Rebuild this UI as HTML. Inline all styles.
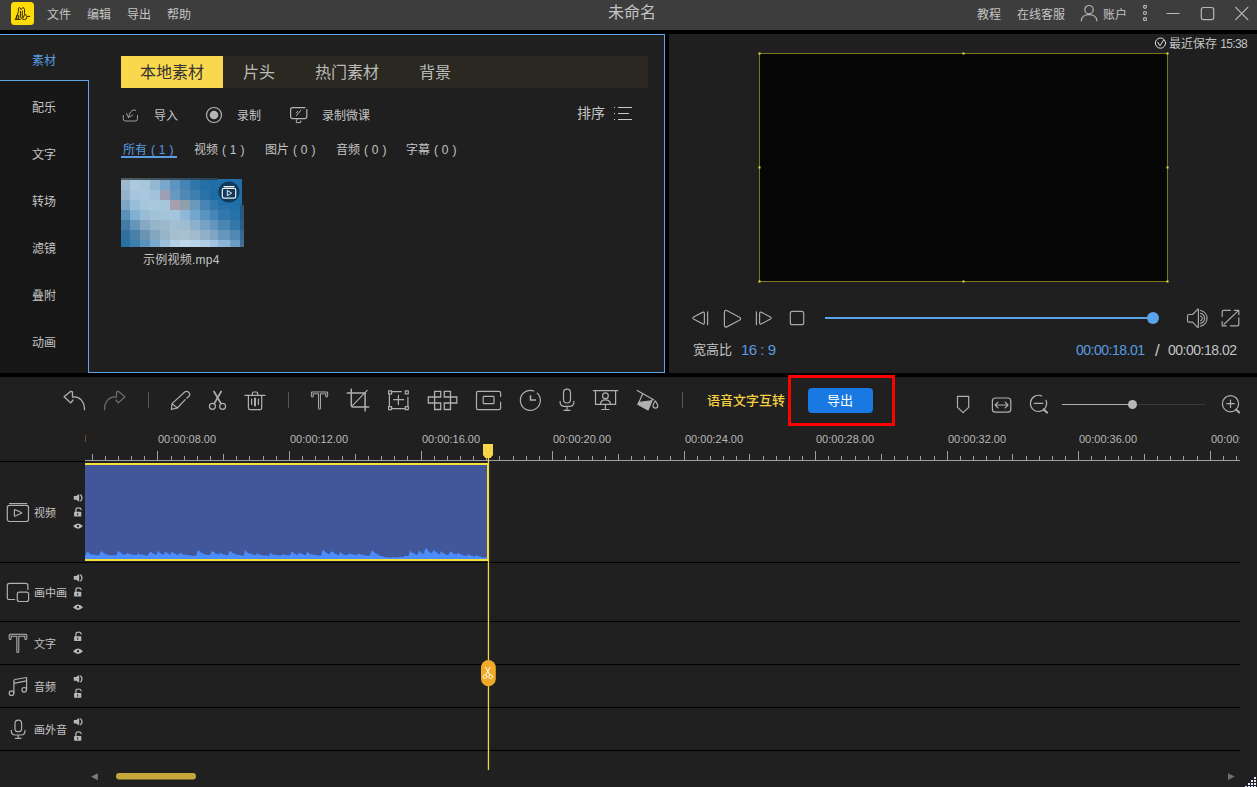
<!DOCTYPE html>
<html lang="zh-CN">
<head>
<meta charset="utf-8">
<title>未命名</title>
<style>
html,body{margin:0;padding:0}
body{width:1257px;height:787px;overflow:hidden;background:#000;position:relative;
 font-family:"Liberation Sans","Noto Sans CJK SC",sans-serif;font-size:12px;color:#c4c4c4}
.a{position:absolute}
.t{position:absolute;white-space:nowrap;height:20px;line-height:20px}
svg{position:absolute;overflow:visible}
.ic{fill:none;stroke-linecap:round;stroke-linejoin:round}
#titlebar{left:0;top:0;width:1257px;height:30px;background:#3d3d3d}
#left{left:0;top:34px;width:665px;height:339px;background:#1f1f1f}
#side{left:0;top:81px;width:88px;height:292px;background:#171717}
#right{left:669px;top:34px;width:588px;height:339px;background:#1f1f1f}
#tl{left:0;top:377px;width:1257px;height:410px;background:#202020}
.bl{position:absolute;background:#60a4e8}
.sep{position:absolute;background:#000;height:1px;left:0;width:1240px}
.rl{top:429px;font-size:11px;color:#b8b8b8}
.vs{position:absolute;width:1px;height:16px;background:#555;top:392px}
</style>
</head>
<body>
<!-- TITLE BAR -->
<div class="a" id="titlebar"></div>
<div class="a" style="left:11px;top:2px;width:23px;height:23px;border-radius:3.5px;background:#ffdc08"></div>
<div class="t" style="left:47px;top:5px">文件</div>
<div class="t" style="left:87px;top:5px">编辑</div>
<div class="t" style="left:127px;top:5px">导出</div>
<div class="t" style="left:167px;top:5px">帮助</div>
<div class="t" style="left:608px;top:3px;font-size:16px">未命名</div>
<div class="t" style="left:977px;top:5px">教程</div>
<div class="t" style="left:1017px;top:5px">在线客服</div>
<div class="t" style="left:1103px;top:5px">账户</div>

<!-- LEFT PANEL -->
<div class="a" id="left"></div>
<div class="a" id="side"></div>
<div class="bl" style="left:0;top:34px;width:665px;height:1px"></div>
<div class="bl" style="left:664px;top:34px;width:1px;height:339px"></div>
<div class="bl" style="left:88px;top:372px;width:577px;height:1px"></div>
<div class="bl" style="left:0;top:80px;width:89px;height:1px"></div>
<div class="bl" style="left:88px;top:80px;width:1px;height:293px"></div>

<div class="t" style="left:32px;top:51px;color:#5b9be0">素材</div>
<div class="t" style="left:32px;top:98px">配乐</div>
<div class="t" style="left:32px;top:145px">文字</div>
<div class="t" style="left:32px;top:192px">转场</div>
<div class="t" style="left:32px;top:239px">滤镜</div>
<div class="t" style="left:32px;top:286px">叠附</div>
<div class="t" style="left:32px;top:333px">动画</div>

<div class="a" style="left:121px;top:56px;width:527px;height:32px;background:#2a2820"></div>
<div class="a" style="left:121px;top:56px;width:102px;height:32px;background:#fad84e"></div>
<div class="t" style="left:140px;top:63px;font-size:16px;color:#333">本地素材</div>
<div class="t" style="left:243px;top:63px;font-size:16px;color:#bcbcbc">片头</div>
<div class="t" style="left:315px;top:63px;font-size:16px;color:#bcbcbc">热门素材</div>
<div class="t" style="left:419px;top:63px;font-size:16px;color:#bcbcbc">背景</div>

<div class="t" style="left:154px;top:106px">导入</div>
<div class="t" style="left:237px;top:106px">录制</div>
<div class="t" style="left:322px;top:106px">录制微课</div>
<div class="t" style="left:577px;top:103px;font-size:14px">排序</div>

<div class="t" style="left:123px;top:140px;word-spacing:0.6px;color:#5b9be0">所有 ( 1 )</div>
<div class="a" style="left:121px;top:156px;width:56px;height:2px;background:#5b9be0"></div>
<div class="t" style="left:194px;top:140px;word-spacing:0.6px">视频 ( 1 )</div>
<div class="t" style="left:265px;top:140px;word-spacing:0.6px">图片 ( 0 )</div>
<div class="t" style="left:336px;top:140px;word-spacing:0.6px">音频 ( 0 )</div>
<div class="t" style="left:406px;top:140px;word-spacing:0.6px">字幕 ( 0 )</div>

<!--THUMB-->
<svg id="thumb" style="left:0;top:0" width="260" height="260" shape-rendering="crispEdges">
<defs><linearGradient id="tg" x1="0" x2="1"><stop offset="0" stop-color="#555d63"/><stop offset="0.45" stop-color="#3d4f5c"/><stop offset="1" stop-color="#23425a"/></linearGradient></defs>
<rect x="121" y="178" width="97" height="2" fill="url(#tg)"/>
<rect x="121" y="180" width="9" height="10" fill="#a0b8cc"/>
<rect x="130" y="180" width="10" height="10" fill="#adc9e0"/>
<rect x="140" y="180" width="10" height="10" fill="#a8c6dc"/>
<rect x="150" y="180" width="10" height="10" fill="#94b8d3"/>
<rect x="160" y="180" width="10" height="10" fill="#7aa8cc"/>
<rect x="170" y="180" width="10" height="10" fill="#5c93bf"/>
<rect x="180" y="180" width="10" height="10" fill="#4584b4"/>
<rect x="190" y="180" width="10" height="10" fill="#2f76aa"/>
<rect x="200" y="180" width="10" height="10" fill="#2470a6"/>
<rect x="210" y="180" width="8" height="10" fill="#1f6ea6"/>
<rect x="218" y="180" width="12" height="10" fill="#1f72ac"/>
<rect x="230" y="180" width="10" height="10" fill="#1f72ac"/>
<rect x="240" y="180" width="4" height="10" fill="#1f72ac"/>
<rect x="121" y="190" width="9" height="10" fill="#94b2ca"/>
<rect x="130" y="190" width="10" height="10" fill="#a6c6de"/>
<rect x="140" y="190" width="10" height="10" fill="#a8c8de"/>
<rect x="150" y="190" width="10" height="10" fill="#a2c2da"/>
<rect x="160" y="190" width="10" height="10" fill="#9ca0b6"/>
<rect x="170" y="190" width="10" height="10" fill="#6698c0"/>
<rect x="180" y="190" width="10" height="10" fill="#5089b5"/>
<rect x="190" y="190" width="10" height="10" fill="#3e80b0"/>
<rect x="200" y="190" width="10" height="10" fill="#2a72a6"/>
<rect x="210" y="190" width="8" height="10" fill="#1f6ca4"/>
<rect x="218" y="190" width="12" height="10" fill="#1f72ac"/>
<rect x="230" y="190" width="10" height="10" fill="#1f72ac"/>
<rect x="240" y="190" width="4" height="10" fill="#1f72ac"/>
<rect x="121" y="200" width="9" height="10" fill="#7ea6c4"/>
<rect x="130" y="200" width="10" height="10" fill="#98bed8"/>
<rect x="140" y="200" width="10" height="10" fill="#a6c6dc"/>
<rect x="150" y="200" width="10" height="10" fill="#aac8dc"/>
<rect x="160" y="200" width="10" height="10" fill="#a6c6dc"/>
<rect x="170" y="200" width="10" height="10" fill="#a6a0ae"/>
<rect x="180" y="200" width="10" height="10" fill="#8f9fae"/>
<rect x="190" y="200" width="10" height="10" fill="#6a98b8"/>
<rect x="200" y="200" width="10" height="10" fill="#4685b4"/>
<rect x="210" y="200" width="8" height="10" fill="#3278aa"/>
<rect x="218" y="200" width="12" height="10" fill="#2872a8"/>
<rect x="230" y="200" width="10" height="10" fill="#2270a8"/>
<rect x="240" y="200" width="4" height="10" fill="#2a5678"/>
<rect x="121" y="210" width="9" height="10" fill="#5c90b8"/>
<rect x="130" y="210" width="10" height="10" fill="#82b0d0"/>
<rect x="140" y="210" width="10" height="10" fill="#98bcd4"/>
<rect x="150" y="210" width="10" height="10" fill="#a2c2d8"/>
<rect x="160" y="210" width="10" height="10" fill="#a4c4da"/>
<rect x="170" y="210" width="10" height="10" fill="#a2c4dc"/>
<rect x="180" y="210" width="10" height="10" fill="#90b8d6"/>
<rect x="190" y="210" width="10" height="10" fill="#72a6cc"/>
<rect x="200" y="210" width="10" height="10" fill="#5a94c0"/>
<rect x="210" y="210" width="8" height="10" fill="#4686b6"/>
<rect x="218" y="210" width="12" height="10" fill="#3278ac"/>
<rect x="230" y="210" width="10" height="10" fill="#2672a8"/>
<rect x="240" y="210" width="4" height="10" fill="#285a80"/>
<rect x="121" y="220" width="9" height="10" fill="#427ba6"/>
<rect x="130" y="220" width="10" height="10" fill="#6496ba"/>
<rect x="140" y="220" width="10" height="10" fill="#86a8c2"/>
<rect x="150" y="220" width="10" height="10" fill="#96b4ca"/>
<rect x="160" y="220" width="10" height="10" fill="#9cb8cc"/>
<rect x="170" y="220" width="10" height="10" fill="#a2bed2"/>
<rect x="180" y="220" width="10" height="10" fill="#a0bcd0"/>
<rect x="190" y="220" width="10" height="10" fill="#8cb0cc"/>
<rect x="200" y="220" width="10" height="10" fill="#76a2c4"/>
<rect x="210" y="220" width="8" height="10" fill="#6296bc"/>
<rect x="218" y="220" width="12" height="10" fill="#4a86b2"/>
<rect x="230" y="220" width="10" height="10" fill="#3278a8"/>
<rect x="240" y="220" width="4" height="10" fill="#2c5e84"/>
<rect x="121" y="230" width="9" height="10" fill="#30709e"/>
<rect x="130" y="230" width="10" height="10" fill="#4a80a8"/>
<rect x="140" y="230" width="10" height="10" fill="#6a94b4"/>
<rect x="150" y="230" width="10" height="10" fill="#86a6c0"/>
<rect x="160" y="230" width="10" height="10" fill="#98b4c8"/>
<rect x="170" y="230" width="10" height="10" fill="#a6bece"/>
<rect x="180" y="230" width="10" height="10" fill="#a8c0d0"/>
<rect x="190" y="230" width="10" height="10" fill="#a0bace"/>
<rect x="200" y="230" width="10" height="10" fill="#90b0ca"/>
<rect x="210" y="230" width="8" height="10" fill="#80a6c4"/>
<rect x="218" y="230" width="12" height="10" fill="#6696bc"/>
<rect x="230" y="230" width="10" height="10" fill="#5088b2"/>
<rect x="240" y="230" width="4" height="10" fill="#386a90"/>
<rect x="121" y="240" width="9" height="7" fill="#2a70a2"/>
<rect x="130" y="240" width="10" height="7" fill="#3c80b0"/>
<rect x="140" y="240" width="10" height="7" fill="#5a94be"/>
<rect x="150" y="240" width="10" height="7" fill="#7aa8cc"/>
<rect x="160" y="240" width="10" height="7" fill="#9cc0dc"/>
<rect x="170" y="240" width="10" height="7" fill="#b4d0e6"/>
<rect x="180" y="240" width="10" height="7" fill="#c0d8ec"/>
<rect x="190" y="240" width="10" height="7" fill="#b8d4ea"/>
<rect x="200" y="240" width="10" height="7" fill="#b0cee6"/>
<rect x="210" y="240" width="8" height="7" fill="#a2c4e0"/>
<rect x="218" y="240" width="12" height="7" fill="#8cb4d6"/>
<rect x="230" y="240" width="10" height="7" fill="#6c9cc4"/>
<rect x="240" y="240" width="4" height="7" fill="#446f92"/>
<rect x="218" y="179" width="24" height="26" fill="#1f70aa"/>
<rect x="242" y="177" width="3" height="28" fill="#1f1f1f"/>
</svg>
<!--/THUMB-->
<div class="t" style="left:143px;top:250px;letter-spacing:0.25px">示例视频.mp4</div>

<!-- RIGHT PANEL -->
<div class="a" id="right"></div>
<div class="t" style="left:1169px;top:34px">最近保存 <span style="letter-spacing:-0.7px">15:38</span></div>
<div class="a" style="left:825px;top:317px;width:328px;height:2px;background:#5ba4ea"></div>
<div class="a" style="left:1147px;top:312px;width:12px;height:12px;border-radius:6px;background:#5ba4ea"></div>
<div class="t" style="left:693px;top:340px;font-size:13px">宽高比</div>
<div class="t" style="left:741px;top:340px;font-size:15px;letter-spacing:-0.5px;color:#5b9be0">16 : 9</div>
<div class="t" style="left:1076px;top:340px;font-size:14px;letter-spacing:-0.5px;color:#5b9be0">00:00:18.01</div>
<div class="t" style="left:1155px;top:341px;font-size:17px">/</div>
<div class="t" style="left:1168px;top:340px;font-size:14px;letter-spacing:-0.5px">00:00:18.02</div>

<!-- TIMELINE -->
<div class="a" id="tl"></div>
<div class="vs" style="left:148px"></div>
<div class="vs" style="left:288px"></div>
<div class="vs" style="left:682px"></div>
<div class="t" style="left:707px;top:391px;font-size:13px;font-weight:500;color:#f5d040">语音文字互转</div>
<div class="a" style="left:808px;top:388px;width:65px;height:25px;border-radius:4px;background:#1a78e2"></div>
<div class="t" style="left:827px;top:391px;font-size:13px;color:#fff">导出</div>
<div class="a" style="left:788px;top:375px;width:101px;height:45px;border:3px solid #ff0000"></div>

<div class="a" style="left:1062px;top:404px;width:70px;height:1px;background:#b0b0b0"></div>
<div class="a" style="left:1132px;top:404px;width:73px;height:1px;background:#3a3a3a"></div>
<div class="a" style="left:1128px;top:400px;width:9px;height:9px;border-radius:5px;background:#b8b8b8"></div>

<!--RULER-->
<svg id="ruler" style="left:0;top:0" width="1257" height="470" shape-rendering="crispEdges">
<rect x="85" y="460" width="1155" height="1" fill="#a0a0a0"/>
<path d="M92.5 454V460M105.5 456V460M118.5 456V460M131.5 456V460M144.5 456V460M157.5 451V460M171.5 456V460M184.5 456V460M197.5 456V460M210.5 456V460M223.5 454V460M236.5 456V460M249.5 456V460M263.5 456V460M276.5 456V460M289.5 451V460M302.5 456V460M315.5 456V460M328.5 456V460M342.5 456V460M355.5 454V460M368.5 456V460M381.5 456V460M394.5 456V460M407.5 456V460M421.5 451V460M434.5 456V460M447.5 456V460M460.5 456V460M473.5 456V460M486.5 454V460M499.5 456V460M513.5 456V460M526.5 456V460M539.5 456V460M552.5 451V460M565.5 456V460M578.5 456V460M592.5 456V460M605.5 456V460M618.5 454V460M631.5 456V460M644.5 456V460M657.5 456V460M670.5 456V460M684.5 451V460M697.5 456V460M710.5 456V460M723.5 456V460M736.5 456V460M749.5 454V460M763.5 456V460M776.5 456V460M789.5 456V460M802.5 456V460M815.5 451V460M828.5 456V460M841.5 456V460M855.5 456V460M868.5 456V460M881.5 454V460M894.5 456V460M907.5 456V460M920.5 456V460M934.5 456V460M947.5 451V460M960.5 456V460M973.5 456V460M986.5 456V460M999.5 456V460M1012.5 454V460M1026.5 456V460M1039.5 456V460M1052.5 456V460M1065.5 456V460M1078.5 451V460M1091.5 456V460M1105.5 456V460M1118.5 456V460M1131.5 456V460M1144.5 454V460M1157.5 456V460M1170.5 456V460M1183.5 456V460M1197.5 456V460M1210.5 451V460M1223.5 456V460M1236.5 456V460" stroke="#a0a0a0" stroke-width="1" fill="none"/>
</svg>
<div class="t rl" style="left:158px">00:00:08.00</div>
<div class="t rl" style="left:290px">00:00:12.00</div>
<div class="t rl" style="left:422px">00:00:16.00</div>
<div class="t rl" style="left:553px">00:00:20.00</div>
<div class="t rl" style="left:685px">00:00:24.00</div>
<div class="t rl" style="left:816px">00:00:28.00</div>
<div class="t rl" style="left:948px">00:00:32.00</div>
<div class="t rl" style="left:1079px">00:00:36.00</div>
<div class="t rl" style="left:1211px;width:29px;overflow:hidden">00:00:40.00</div>
<div class="a" style="left:85px;top:435px;width:1px;height:7px;background:#7a4e26;border-radius:1px"></div>
<!--/RULER-->

<div class="sep" style="top:461px;width:85px"></div>
<div class="sep" style="top:562px"></div>
<div class="sep" style="top:621px"></div>
<div class="sep" style="top:664px"></div>
<div class="sep" style="top:707px"></div>
<div class="sep" style="top:750px"></div>

<div class="a" style="left:85px;top:463px;width:403px;height:98px;background:#41579a;border-top:2px solid #f3e23a;border-bottom:2px solid #f3e23a;border-right:1px solid #f3e23a;box-sizing:border-box"></div>

<!--WAVE-->
<svg id="wave" style="left:0;top:0" width="500" height="570"><polygon fill="#4b8dff" points="85,559.0 85,556.2 86,553.9 87,551.5 88,552.1 89,552.7 90,553.9 91,554.4 92,553.9 93,554.8 94,555.1 95,554.5 96,555.2 97,555.0 98,555.5 99,555.4 100,553.5 101,551.0 102,551.6 103,552.7 104,553.0 105,553.6 106,554.7 107,554.2 108,554.7 109,555.2 110,555.7 111,554.9 112,555.4 113,555.3 114,555.2 115,555.4 116,555.2 117,553.7 118,550.4 119,551.7 120,552.0 121,552.7 122,554.0 123,554.4 124,554.7 125,554.1 126,555.0 127,552.4 128,553.4 129,553.7 130,554.2 131,554.6 132,554.6 133,554.8 134,554.7 135,555.1 136,554.9 137,555.1 138,553.0 139,553.8 140,554.7 141,554.3 142,554.4 143,554.6 144,555.2 145,555.1 146,555.8 147,555.2 148,555.5 149,553.2 150,552.2 151,552.1 152,552.6 153,554.1 154,553.7 155,554.5 156,555.1 157,553.5 158,551.1 159,551.8 160,553.4 161,553.3 162,554.4 163,554.0 164,554.8 165,551.4 166,552.0 167,553.2 168,553.1 169,554.3 170,554.9 171,552.7 172,552.0 173,552.6 174,553.1 175,553.4 176,554.3 177,554.8 178,554.2 179,555.1 180,552.5 181,553.1 182,554.1 183,554.4 184,554.6 185,554.7 186,555.0 187,555.2 188,555.2 189,555.0 190,555.5 191,555.7 192,555.4 193,556.0 194,556.0 195,555.3 196,555.8 197,553.0 198,549.9 199,550.7 200,551.5 201,552.9 202,552.9 203,553.4 204,554.5 205,554.2 206,554.7 207,554.7 208,555.2 209,555.0 210,555.1 211,552.7 212,551.2 213,551.4 214,551.9 215,553.3 216,553.6 217,553.9 218,554.6 219,554.8 220,552.6 221,553.2 222,553.5 223,554.2 224,554.5 225,554.3 226,555.4 227,555.0 228,555.0 229,552.3 230,550.9 231,551.2 232,552.6 233,553.4 234,553.6 235,553.8 236,554.8 237,554.8 238,555.1 239,554.7 240,555.3 241,555.0 242,555.8 243,555.7 244,554.9 245,549.6 246,551.1 247,552.3 248,553.1 249,553.2 250,554.1 251,553.8 252,554.1 253,555.1 254,555.2 255,554.8 256,555.1 257,553.1 258,554.0 259,554.7 260,554.8 261,554.5 262,555.3 263,555.4 264,555.4 265,555.5 266,555.6 267,555.1 268,556.0 269,556.3 270,553.1 271,553.6 272,553.8 273,554.7 274,554.4 275,554.6 276,555.5 277,555.1 278,555.1 279,555.4 280,555.6 281,555.9 282,553.9 283,554.4 284,554.9 285,554.6 286,555.2 287,554.8 288,555.8 289,555.0 290,555.3 291,553.1 292,551.6 293,552.3 294,553.2 295,554.3 296,553.9 297,554.9 298,555.0 299,552.3 300,553.1 301,553.7 302,553.6 303,554.3 304,554.8 305,555.2 306,554.7 307,552.1 308,552.4 309,553.5 310,554.1 311,554.2 312,554.2 313,555.1 314,554.7 315,554.7 316,555.0 317,555.1 318,556.1 319,555.5 320,555.3 321,556.2 322,552.5 323,549.7 324,550.6 325,551.7 326,552.4 327,552.7 328,554.1 329,554.5 330,553.5 331,551.1 332,552.1 333,551.9 334,552.7 335,554.0 336,554.0 337,554.6 338,554.9 339,555.1 340,551.9 341,552.7 342,553.5 343,554.2 344,554.4 345,554.9 346,554.7 347,554.8 348,555.3 349,553.3 350,553.7 351,554.0 352,554.1 353,554.2 354,554.9 355,554.7 356,555.0 357,555.4 358,553.6 359,553.9 360,554.0 361,554.7 362,554.6 363,555.1 364,555.5 365,555.3 366,555.2 367,556.0 368,555.7 369,555.8 370,555.3 371,552.3 372,550.5 373,550.9 374,551.9 375,553.1 376,553.5 377,554.3 378,553.9 379,555.8 380,555.8 381,556.1 382,556.4 383,556.5 384,556.8 385,557.4 386,556.9 387,557.6 388,557.5 389,556.9 390,557.7 391,557.7 392,557.7 393,556.8 394,557.6 395,557.8 396,556.9 397,557.7 398,556.9 399,557.1 400,557.0 401,556.8 402,557.2 403,557.0 404,556.5 405,555.6 406,555.9 407,555.7 408,556.4 409,554.6 410,550.2 411,552.1 412,552.6 413,553.0 414,553.2 415,554.3 416,554.7 417,554.9 418,553.8 419,550.2 420,551.6 421,552.4 422,553.1 423,553.6 424,554.0 425,549.5 426,548.1 427,549.0 428,550.8 429,551.4 430,552.8 431,552.8 432,553.3 433,550.9 434,550.1 435,551.2 436,551.9 437,552.3 438,553.7 439,554.2 440,553.9 441,551.0 442,552.3 443,553.0 444,553.3 445,554.3 446,554.6 447,554.9 448,554.8 449,554.4 450,551.5 451,551.8 452,552.3 453,553.6 454,553.6 455,554.3 456,554.2 457,554.8 458,552.4 459,553.3 460,554.2 461,554.2 462,554.8 463,555.4 464,555.5 465,555.9 466,555.6 467,556.5 468,553.8 469,554.9 470,555.2 471,555.7 472,555.6 473,555.9 474,556.4 475,556.7 476,555.1 477,555.4 478,556.3 479,556.2 480,556.3 481,557.0 482,557.5 483,557.7 484,557.3 485,557.5 486,557.3 487,557.5 487,559.0"/></svg>
<!--/WAVE-->
<div class="t" style="left:34px;top:503px;font-size:11px">视频</div>
<div class="t" style="left:34px;top:583px;font-size:11px">画中画</div>
<div class="t" style="left:34px;top:634px;font-size:11px">文字</div>
<div class="t" style="left:34px;top:677px;font-size:11px">音频</div>
<div class="t" style="left:34px;top:720px;font-size:11px">画外音</div>


<!--ICONS-->
<svg id="icons" style="left:0;top:0" width="1257" height="787" viewBox="0 0 1257 787">
<!-- logo glyph -->
<g fill="none" stroke="#1a1400" stroke-width="0.9" stroke-linejoin="round" stroke-linecap="round">
<path d="M15.2 19.4H20.4M15.6 19.2L18.4 11.7L18.3 8.9L19.5 7.3L21 9.6L23.1 7.3L24.5 9.3V13.5L25.9 15L26.8 16.4L26.3 18.9L24.5 19.6L22.4 19.2L21.3 17.8M27.4 16.4H29.7M20.4 11.4V17.2M17 15.5L16.8 19M18.6 15.5L18.8 19M22.3 11V17.5M24.6 14.5L23.2 17.8"/>
</g>
<!-- title bar right -->
<g class="ic" stroke="#b8b8b8" stroke-width="1.2">
<circle cx="1089" cy="9.7" r="4.2"/>
<path d="M1081.3 20.8C1081.3 16.6 1084.8 14.6 1089 14.6S1096.9 16.6 1096.9 20.8"/>
<circle cx="1145" cy="6.8" r="1.5"/><circle cx="1145" cy="13" r="1.5"/><circle cx="1145" cy="19.2" r="1.5"/>
<path d="M1167 13.5H1179"/>
<rect x="1201.3" y="7.5" width="12.4" height="12.2" rx="2.2"/>
<path d="M1235.7 7.3L1247.8 19.6M1247.8 7.3L1235.7 19.6"/>
</g>
<!-- left panel row icons -->
<g class="ic" stroke="#a4a4a4" stroke-width="0.95">
<path d="M123.3 115.4V118.8Q123.3 121 125.5 121H135.3Q137.5 121 137.5 118.8V115.4"/>
<path d="M135.8 110.2Q133 108.6 130.6 112Q129 114.6 128.5 117.5M126.5 113.4L128.5 117.6L132.6 115.1"/>
</g>
<g class="ic" stroke="#b4b4b4" stroke-width="1.2">
<circle cx="214" cy="115" r="7.5"/>
<circle cx="214" cy="115" r="4.3" fill="#b4b4b4" stroke="none"/>
<path d="M305 107.6H292.8Q290.6 107.6 290.6 109.8V116.6Q290.6 118.7 292.8 118.7H304.6Q306.8 118.7 306.8 116.6V109.6"/>
<path d="M297.5 118.8L296.3 120.8V122.6H300.8V120.8M296.5 115.5L300.7 110.4M296.3 113L297.6 111.4" stroke-width="1"/>
</g>
<g stroke="#c8c8c8" stroke-width="1" fill="none" shape-rendering="crispEdges">
<path d="M614 107.5H615M614 113.5H615M614 119.5H615M618 107.5H632M618 113.5H629M618 119.5H632"/>
</g>
<!-- thumb badge -->
<circle cx="229" cy="192" r="10.6" fill="#0f3a5c"/>
<g class="ic" stroke="#f0f0f0" stroke-width="1.2">
<path d="M224 186.6H234"/>
<rect x="222.3" y="188.3" width="13.4" height="9.8" rx="1.6"/>
<path d="M227.3 190.8V195.8L231.3 193.3Z" stroke-width="1"/>
</g>
<!-- saved check -->
<g class="ic" stroke="#e0e0e0" stroke-width="1">
<circle cx="1160.5" cy="43.1" r="5.1"/>
<path d="M1157.8 42.3L1160 45.8L1163.5 40.2"/>
</g>
<!-- preview frame -->
<rect x="759.5" y="53.5" width="408" height="228" fill="#060606" stroke="#78781e" stroke-width="1"/>
<g fill="#e6e62e">
<rect x="758.5" y="52.5" width="2" height="2"/><rect x="962.5" y="52.5" width="2" height="2"/><rect x="1166.5" y="52.5" width="2" height="2"/>
<rect x="758.5" y="166.5" width="2" height="2"/><rect x="1166.5" y="166.5" width="2" height="2"/>
<rect x="758.5" y="280.5" width="2" height="2"/><rect x="962.5" y="280.5" width="2" height="2"/><rect x="1166.5" y="280.5" width="2" height="2"/>
</g>
<!-- player controls -->
<g class="ic" stroke="#a8a8a8" stroke-width="1.2">
<path d="M704.4 313.6Q704.4 311.4 702.4 312.4L693.6 317Q692 318 693.6 319L702.4 323.8Q704.4 324.8 704.4 322.6ZM707.6 311.8V324.7"/>
<path d="M724.4 312.6Q724.4 309.2 727.3 310.8L739.4 317.2Q741.8 318.7 739.4 320.2L727.3 326.6Q724.4 328.2 724.4 324.8Z"/>
<path d="M756.4 311.8V324.7M759.6 313.6Q759.6 311.4 761.6 312.4L770.4 317Q772 318 770.4 319L761.6 323.8Q759.6 324.8 759.6 322.6Z"/>
<rect x="790.3" y="311.4" width="13.4" height="13.3" rx="2"/>
<!-- volume -->
<path d="M1198.4 309.4V327.2Q1198.3 327.8 1197.6 327.3L1192.6 322.2H1189Q1187.5 322.2 1187.5 320.6V316Q1187.5 314.5 1189 314.5H1192.6L1197.6 309.3Q1198.3 308.8 1198.4 309.4Z"/>
<path d="M1200.6 316A2.6 2.6 0 0 1 1200.6 320.8M1200.6 313.3A5.2 5.2 0 0 1 1200.6 323.4M1200.6 310.5A8 8 0 0 1 1200.6 326.2"/>
<!-- fullscreen -->
<path d="M1222.2 316.6V311.8Q1222.2 310.4 1223.6 310.4H1230.4M1234.4 310.4H1238.8V314.8M1238.8 317.8V324.5Q1238.8 325.9 1237.4 325.9H1230.4M1222.2 321.5V325.9H1226.3M1224 324.2L1237.6 311.4"/>
</g>
<!-- toolbar -->
<g class="ic" stroke="#b0b0b0" stroke-width="1.3">
<path d="M72.5 397.2V391.9L70.8 391.3L64.1 396.8L70.8 402.9L73 400M72.5 397.1C79.5 395.9 84.5 401.5 84.5 409.8"/>
</g>
<g class="ic" stroke="#6a6a6a" stroke-width="1.3">
<path d="M116.5 397.2V391.9L118.2 391.3L124.9 396.8L118.2 402.9L116 400M116.5 397.1C109.5 395.9 104.5 401.5 104.5 409.8"/>
</g>
<g class="ic" stroke="#b0b0b0" stroke-width="1.2">
<!-- pencil -->
<path d="M171.4 409.4L172 403.6L185 391.8Q187 390.6 188.8 392.4Q190.6 394.4 189 396.2L186.8 398.2M185.2 399.6L177.3 408L171.4 409.4M172 403.6L177.3 408"/>
<!-- scissors -->
<path d="M214 391.5L221 403.6M221.2 391.5L214.2 403.6" stroke-width="1.7"/>
<circle cx="212.4" cy="406.3" r="3"/><circle cx="222.6" cy="406.3" r="3"/>
<!-- trash -->
<path d="M245 395.4H265M252.4 395.2V393.2Q252.4 392 253.6 392H256.4Q257.6 392 257.6 393.2V395.2M248.4 396V408Q248.4 409.7 250.1 409.7H260Q261.7 409.7 261.7 408V396"/>
<path d="M251.6 399V404.4M258.4 399V404.4"/><path d="M255 398.6V405.4" stroke-width="2"/>
</g>
<!-- T outline -->
<path d="M312.3 396V392.9H326.7V396M319.5 393V408.3" fill="none" stroke="#b0b0b0" stroke-width="2.9" stroke-linecap="round" stroke-linejoin="round"/>
<path d="M312.3 396V392.9H326.7V396M319.5 393V408.3" fill="none" stroke="#202020" stroke-width="0.9" stroke-linecap="round" stroke-linejoin="round"/>
<g class="ic" stroke="#b0b0b0" stroke-width="1.5">
<!-- crop -->
<path d="M351.3 389.3V405.4Q351.3 406.9 352.8 406.9H368.7M347.3 393H365.1V410.9" />
<path d="M352.2 405.8L367.2 390.3" stroke-width="1.1"/>
</g>
<g class="ic" stroke="#b0b0b0" stroke-width="1.2">
<!-- select -->
<rect x="388.6" y="390.9" width="3" height="3"/><rect x="405.3" y="390.9" width="3" height="3"/>
<rect x="388.6" y="406.6" width="3" height="3"/><rect x="405.3" y="406.6" width="3" height="3"/>
<path d="M391.8 391.6H401.2M389.4 394.2V406.4M391.8 408.6H405.2M407.9 397.4V406.4M393.6 399.7H403.6M398.4 395.4V404.5"/>
<!-- mosaic -->
<path d="M434.6 391.4H440.7V397H428.3V403H440.7V409.5H434.6ZM450.5 391.4H444.3V397H456.8V403H444.3V409.5H450.5Z" stroke-width="1.3" stroke-linejoin="miter"/>
<!-- freeze rect -->
<path d="M500.6 396.4V393Q500.6 391.4 499 391.4H478.1Q476.5 391.4 476.5 393V408Q476.5 409.6 478.1 409.6H499Q500.6 409.6 500.6 408V402.2"/>
<rect x="483.2" y="396.4" width="10.8" height="7.3" rx="0.8"/>
<!-- clock -->
<path d="M533.8 391A10 10 0 1 0 537.2 393.1"/><path d="M530.5 395.2V399.9H536" stroke-width="1.5" stroke-linecap="butt" stroke-linejoin="miter"/>
<!-- mic -->
<rect x="563.5" y="389.2" width="7" height="13.8" rx="3.5"/>
<path d="M560.1 401.4V402Q560.1 406.4 564.5 406.4H569.5Q573.9 406.4 573.9 402V401.4M567 406.4V410.3M564 410.3H570"/>
<!-- presenter -->
<path d="M593.3 390.6H617.8M595.5 390.6V404.4H615.6V390.6M605.4 404.4V409.5M601.8 409.5H609"/>
<circle cx="605.4" cy="395.8" r="2.9"/>
<path d="M600.4 404.2Q600.6 399.8 605.4 399.8T610.6 404.2"/>
<!-- bucket -->
<path d="M637.2 390.6L653.6 399.8M642.6 394L638 404.2L648 409.7L652.3 399.4"/>
<path d="M638 404.2L648 409.7L651.8 400.8L639.2 402.4Z" fill="#b0b0b0"/>
<path d="M655.3 400.8Q657.8 404.4 657.8 405.8A2.4 2.4 0 0 1 653 405.8Q653 404.4 655.3 400.8Z"/>
</g>
<!-- right toolbar -->
<g class="ic" stroke="#b0b0b0" stroke-width="1.2">
<path d="M957.5 396.4H968.7V407.4L963.1 412.6L957.5 407.4Z"/>
<rect x="992.4" y="398" width="18.4" height="14.2" rx="3"/>
<path d="M995.2 405H1008M998 402.2L995.2 405L998 407.8M1005.2 402.2L1008 405L1005.2 407.8"/>
<path d="M1041.6 395.9A8.1 8.1 0 1 0 1046 400.3M1034.3 403.3H1042.9"/>
<path d="M1043.6 409.4L1047 412.6" stroke-width="2"/>
<circle cx="1230.5" cy="403.7" r="8.1"/>
<path d="M1226.8 403.7H1234.2M1230.5 400V407.4"/>
<path d="M1236 409.6L1239.2 412.5" stroke-width="2"/>
</g>
<!-- track icons -->
<g class="ic" stroke="#b0b0b0" stroke-width="1.2">
<path d="M9.4 503.5H26.8" stroke-width="1"/>
<rect x="7.3" y="505.3" width="21.2" height="16.2" rx="2.2"/>
<path d="M14.4 510.4Q14.4 509.4 15.3 509.8L21.4 512.5Q22 512.9 21.4 513.3L15.3 516Q14.4 516.4 14.4 515.4Z"/>
<!-- pip -->
<path d="M14.7 599.5H9.4Q7.3 599.5 7.3 597.4V585.4Q7.3 583.3 9.4 583.3H25.8Q27.9 583.3 27.9 585.4V589.5"/>
<rect x="17.3" y="592.1" width="11.3" height="9.4" rx="2"/>
<!-- music -->
<circle cx="11.5" cy="693.2" r="2.3"/><circle cx="24.2" cy="689.8" r="2.3"/>
<path d="M13.9 692.8V680.8Q13.9 679.8 15 679.5L26.6 677.5V689.6M13.9 683.4L26.6 680.8"/>
<!-- mic -->
<rect x="15" y="720.1" width="6.6" height="11.6" rx="3.3"/>
<path d="M11.3 730.3V731Q11.3 735 15.3 735H21Q25 735 25 731V730.3M18.2 735V738.3M15.4 738.3H21.1"/>
</g>
<!-- T track icon -->
<path d="M10.2 638.6V635.3H25.8V638.6M17.8 635.4V651.6" fill="none" stroke="#b0b0b0" stroke-width="3" stroke-linecap="round" stroke-linejoin="round"/>
<path d="M10.2 638.6V635.3H25.8V638.6M17.8 635.4V651.6" fill="none" stroke="#202020" stroke-width="0.9" stroke-linecap="round" stroke-linejoin="round"/>
<!-- small symbols -->

<g transform="translate(73.8 494.1)"><path d="M0 2H2.4L5.4 0V7.6L2.4 5.6H0Z" fill="#b8b8b8"/><path d="M6.9 0.9Q9.4 3.8 6.9 6.7" fill="none" stroke="#b8b8b8" stroke-width="1.3" stroke-linecap="round"/></g><g transform="translate(74.1 507.2)"><rect x="0" y="4.6" width="7.2" height="4.8" rx="0.6" fill="#b8b8b8"/><path d="M1.8 4.6V2.6Q1.8 0.6 4 0.6Q6.6 0.4 7.2 2.4" fill="none" stroke="#b8b8b8" stroke-width="1.2" stroke-linecap="round"/><rect x="3.1" y="6" width="1" height="2.2" fill="#202020"/></g><g transform="translate(73 523.3)"><path d="M0 2.8Q5 -2.6 10 2.8Q5 8.2 0 2.8Z" fill="#b8b8b8"/><circle cx="5" cy="2.8" r="1.15" fill="#202020"/></g>
<g transform="translate(73.8 574.1)"><path d="M0 2H2.4L5.4 0V7.6L2.4 5.6H0Z" fill="#b8b8b8"/><path d="M6.9 0.9Q9.4 3.8 6.9 6.7" fill="none" stroke="#b8b8b8" stroke-width="1.3" stroke-linecap="round"/></g><g transform="translate(74.1 587.2)"><rect x="0" y="4.6" width="7.2" height="4.8" rx="0.6" fill="#b8b8b8"/><path d="M1.8 4.6V2.6Q1.8 0.6 4 0.6Q6.6 0.4 7.2 2.4" fill="none" stroke="#b8b8b8" stroke-width="1.2" stroke-linecap="round"/><rect x="3.1" y="6" width="1" height="2.2" fill="#202020"/></g><g transform="translate(73 604.4)"><path d="M0 2.8Q5 -2.6 10 2.8Q5 8.2 0 2.8Z" fill="#b8b8b8"/><circle cx="5" cy="2.8" r="1.15" fill="#202020"/></g>
<g transform="translate(74.1 631.6)"><rect x="0" y="4.6" width="7.2" height="4.8" rx="0.6" fill="#b8b8b8"/><path d="M1.8 4.6V2.6Q1.8 0.6 4 0.6Q6.6 0.4 7.2 2.4" fill="none" stroke="#b8b8b8" stroke-width="1.2" stroke-linecap="round"/><rect x="3.1" y="6" width="1" height="2.2" fill="#202020"/></g><g transform="translate(73 648.4)"><path d="M0 2.8Q5 -2.6 10 2.8Q5 8.2 0 2.8Z" fill="#b8b8b8"/><circle cx="5" cy="2.8" r="1.15" fill="#202020"/></g>
<g transform="translate(73.8 675.1)"><path d="M0 2H2.4L5.4 0V7.6L2.4 5.6H0Z" fill="#b8b8b8"/><path d="M6.9 0.9Q9.4 3.8 6.9 6.7" fill="none" stroke="#b8b8b8" stroke-width="1.3" stroke-linecap="round"/></g><g transform="translate(74.1 688.4)"><rect x="0" y="4.6" width="7.2" height="4.8" rx="0.6" fill="#b8b8b8"/><path d="M1.8 4.6V2.6Q1.8 0.6 4 0.6Q6.6 0.4 7.2 2.4" fill="none" stroke="#b8b8b8" stroke-width="1.2" stroke-linecap="round"/><rect x="3.1" y="6" width="1" height="2.2" fill="#202020"/></g>
<g transform="translate(73.8 718)"><path d="M0 2H2.4L5.4 0V7.6L2.4 5.6H0Z" fill="#b8b8b8"/><path d="M6.9 0.9Q9.4 3.8 6.9 6.7" fill="none" stroke="#b8b8b8" stroke-width="1.3" stroke-linecap="round"/></g><g transform="translate(74.1 731.3)"><rect x="0" y="4.6" width="7.2" height="4.8" rx="0.6" fill="#b8b8b8"/><path d="M1.8 4.6V2.6Q1.8 0.6 4 0.6Q6.6 0.4 7.2 2.4" fill="none" stroke="#b8b8b8" stroke-width="1.2" stroke-linecap="round"/><rect x="3.1" y="6" width="1" height="2.2" fill="#202020"/></g>
<!-- playhead -->
<rect x="487.8" y="450" width="1.3" height="320" fill="#f7d248"/>
<path d="M483 444H493V455L490.6 458H485.4L483 455Z" fill="#f8d548"/>
<rect x="481" y="660" width="14.8" height="26.2" rx="7.4" fill="#f0aa28"/>
<g fill="none" stroke="#fff" stroke-width="0.8" stroke-linecap="round">
<path d="M485.6 667.3L489.8 674.8M490 667.3L485.8 674.8" stroke-width="1"/>
<circle cx="485.1" cy="676.7" r="1.9"/><circle cx="490.6" cy="676.7" r="1.9"/>
</g>
<!-- scrollbar -->
<path d="M91.2 776.7L97.8 773.3V780.2Z" fill="#7c7c7c"/>
<path d="M1234.9 776.6L1228 773.2V780Z" fill="#6e6e6e"/>
<rect x="116" y="773" width="80" height="6.4" rx="3.2" fill="#c4a73a"/>
<g fill="#e8ecff" shape-rendering="crispEdges">
<rect x="1254" y="777" width="2" height="2"/>
<rect x="1251" y="780" width="2" height="2"/><rect x="1254" y="780" width="2" height="2"/>
<rect x="1248" y="783" width="2" height="2"/><rect x="1251" y="783" width="2" height="2"/><rect x="1254" y="783" width="2" height="2"/>
<rect x="1245" y="786" width="2" height="1"/><rect x="1248" y="786" width="2" height="1"/><rect x="1251" y="786" width="2" height="1"/><rect x="1254" y="786" width="2" height="1"/>
</g>
</svg>
<!--/ICONS-->
</body>
</html>
